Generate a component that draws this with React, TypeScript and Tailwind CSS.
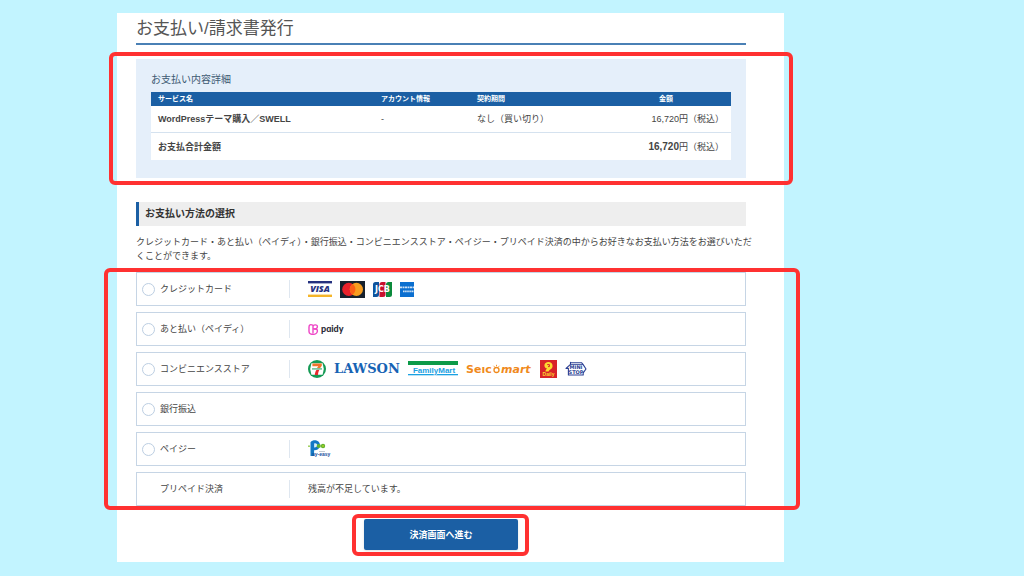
import type { ReactNode } from "react";

const sans = "font-['Liberation_Sans','Noto_Sans_CJK_JP',sans-serif]";

function Highlight({ className }: { className: string }) {
  return (
    <div
      aria-hidden="true"
      className={`absolute z-10 pointer-events-none rounded-md border-4 border-[#ff3131] ${className}`}
    />
  );
}

function Visa() {
  return (
    <svg width="24" height="16" viewBox="0 0 24 16" role="img" aria-label="VISA">
      <rect width="24" height="2.4" fill="#25317f" />
      <rect y="13.6" width="24" height="2.4" fill="#f5b52a" />
      <text
        x="12"
        y="11"
        textAnchor="middle"
        fontSize="9"
        fontWeight="800"
        fontStyle="italic"
        fontFamily="Open Sans, sans-serif"
        fill="#25317f"
      >
        VISA
      </text>
    </svg>
  );
}

function Mastercard() {
  return (
    <svg width="25" height="17" viewBox="0 0 25 17" role="img" aria-label="Mastercard">
      <rect width="25" height="17" fill="#16212d" />
      <circle cx="8.8" cy="8.3" r="6.6" fill="#e9222b" />
      <circle cx="16.4" cy="8.3" r="6.6" fill="#f79d1f" />
      <path d="M12.6 2.9a6.6 6.6 0 0 1 0 10.8a6.6 6.6 0 0 1 0-10.8z" fill="#fb5f16" />
    </svg>
  );
}

function Jcb() {
  return (
    <svg width="19" height="15" viewBox="0 0 19 15" role="img" aria-label="JCB">
      <path d="M2.5 0H6v12.5A2.5 2.5 0 0 1 3.5 15H0V2.5A2.5 2.5 0 0 1 2.5 0z" fill="#0f549d" />
      <path d="M9 0h3.5v12.5A2.5 2.5 0 0 1 10 15H6.5V2.5A2.5 2.5 0 0 1 9 0z" fill="#c8102e" />
      <path d="M15.5 0H19v12.5a2.5 2.5 0 0 1-2.5 2.5H13V2.5A2.5 2.5 0 0 1 15.5 0z" fill="#0b8a3c" />
      <text
        x="9.5"
        y="10"
        textAnchor="middle"
        fontSize="8"
        fontWeight="700"
        fontFamily="DejaVu Sans, sans-serif"
        fill="#fff"
      >
        JCB
      </text>
    </svg>
  );
}

function Amex() {
  return (
    <svg width="14" height="15" viewBox="0 0 14 15" role="img" aria-label="American Express">
      <rect width="14" height="15" fill="#0b6fd0" />
      <g stroke="#fff" strokeWidth="1.6" opacity=".8">
        <path d="M0 5.4h14" strokeDasharray="2 .5" />
        <path d="M3 9.4h11" strokeDasharray="1.6 .5" />
      </g>
    </svg>
  );
}

function Paidy() {
  return (
    <svg width="36" height="14" viewBox="0 0 36 14" role="img" aria-label="paidy">
      <g fill="none" stroke="#ee45c6" strokeWidth="1.4" strokeLinecap="round">
        <path d="M4.6 3.2C2.6 2 1 3 1 5v4.400c0 2 2 3.400 4 2.600" />
        <path d="M5 10.400V4.600C5 2.600 9.400 2 9.400 4.700c0 2-2 2.300-3.600 2.200" />
        <path d="M6.400 7c2-.2 3.200.6 3 2.200C9.200 11 7.400 12.600 5 12.400" />
      </g>
      <text
        x="13"
        y="10"
        fontSize="9"
        fontWeight="900"
        fontFamily="Lato, sans-serif"
        fill="#2d2c38"
      >
        pɑidy
      </text>
    </svg>
  );
}

function SevenEleven() {
  return (
    <svg width="18" height="18" viewBox="0 0 18 18" role="img" aria-label="セブン-イレブン">
      <circle cx="9" cy="9" r="9" fill="#159a55" />
      <path d="M3.4 3.2h11.2l1.2 5.8-1.2 5.8H3.4L2.2 9z" fill="#fff" />
      <path d="M4.4 3.6h9.4v2.2l-1.800 2.400H8.800l1.500-2H4.400z" fill="#f2732b" />
      <path d="M8.600 9.800h2.800c-.9 1.600-1.300 3.200-1.400 5.200H6.800c.1-2 .7-3.800 1.800-5.200z" fill="#e62a2e" />
      <path d="M4 8.200h10v1.400H4z" fill="#5eb98a" />
    </svg>
  );
}

function Lawson() {
  return (
    <svg width="66" height="14" viewBox="0 0 66 14" role="img" aria-label="LAWSON">
      <text
        x="0"
        y="11"
        fontSize="13"
        fontWeight="700"
        fontFamily="DejaVu Serif, serif"
        fill="#1763b4"
      >
        LAWSON
      </text>
    </svg>
  );
}

function FamilyMart() {
  return (
    <svg width="50" height="16" viewBox="0 0 50 16" role="img" aria-label="FamilyMart">
      <rect width="50" height="4" fill="#0c9a48" />
      <rect y="13" width="50" height="1.3" fill="#1ba1e2" />
      <text
        x="26"
        y="12"
        textAnchor="middle"
        fontSize="8"
        fontWeight="700"
        fontFamily="Liberation Sans, sans-serif"
        fill="#1ba1e2"
        stroke="#fff"
        strokeWidth="1"
        paintOrder="stroke"
      >
        FamilyMart
      </text>
    </svg>
  );
}

function Seicomart() {
  return (
    <svg width="66" height="14" viewBox="0 0 66 14" role="img" aria-label="Seicomart">
      <g fontSize="11" fontWeight="700" fontFamily="DejaVu Sans, sans-serif" fill="#f08a1c">
        <text x="0" y="11">
          Seıc
        </text>
        <text x="35" y="11" fontStyle="italic">
          mart
        </text>
      </g>
      <circle cx="30.500" cy="8" r="2.500" fill="none" stroke="#f08a1c" strokeWidth="1.300" />
      <path
        d="M27.500 3.800l1 1M30.500 2.800v1.400M33.500 3.800l-1 1"
        stroke="#f08a1c"
        strokeWidth=".9"
      />
    </svg>
  );
}

function Daily() {
  return (
    <svg width="17" height="18" viewBox="0 0 17 18" role="img" aria-label="デイリーヤマザキ">
      <rect width="17" height="18" fill="#d8232a" />
      <path
        d="M4.400 5.600C4.400 3.400 6.200 2 8.400 2c2.400 0 4.200 1.600 4.200 3.900 0 1.900-1.200 2.900-2.400 3.500-1 .5-1.200 1.200-1.600 2.200H5.400c.2-1.400.8-2.200 1.800-3C5.400 8.400 4.400 7.200 4.400 5.600z"
        fill="#fbd930"
      />
      <path d="M7.200 4.600h2.200v2H8" fill="none" stroke="#d8232a" strokeWidth="1" />
      <text
        x="8.5"
        y="16"
        textAnchor="middle"
        fontSize="5"
        fontWeight="700"
        fontFamily="Liberation Sans, sans-serif"
        fill="#fbd930"
      >
        Daily
      </text>
    </svg>
  );
}

function MiniStop() {
  return (
    <svg width="22" height="16" viewBox="0 0 22 16" role="img" aria-label="MINI STOP">
      <path
        d="M5.500 1.200V3.400L1 7.400h2.400V14h14.800v-2.200L21 8l-3-4.600-1.500-1.700H5.500z"
        fill="#fff"
        stroke="#2a3f93"
        strokeWidth="1.100"
        strokeLinejoin="round"
      />
      <path d="M6 3.500h12" stroke="#2a3f93" strokeWidth=".8" />
      <g
        fontSize="5"
        fontWeight="700"
        fontFamily="DejaVu Sans, sans-serif"
        fill="#2a3f93"
        textAnchor="middle"
      >
        <text x="11" y="8">
          MINI
        </text>
        <text x="11" y="13">
          STOP
        </text>
      </g>
    </svg>
  );
}

function PayEasy() {
  return (
    <svg width="24" height="18" viewBox="0 0 24 18" role="img" aria-label="Pay-easy">
      <path
        d="M2.500 2.200C4 .5 6.500 0 8.500.6c3 .9 4.200 3.900 3 6.700-.9 2.100-2.900 3.200-5.400 3V16H2.500z"
        fill="#1478c4"
      />
      <path d="M6.100 3.400c2-.6 3.300.5 3.100 2.100-.2 1.300-1.300 2.100-3.100 2z" fill="#d9effa" />
      <circle cx="10.800" cy="6" r="2.100" fill="#63b32e" />
      <circle cx="15" cy="6" r="2.200" fill="#63b32e" />
      <circle cx="15" cy="6" r=".8" fill="#d9e021" />
      <circle cx="1" cy="6.200" r=".9" fill="#8cc63f" />
      <path d="M11 11.500h6" stroke="#9aa7b5" strokeWidth=".6" />
      <text
        x="4"
        y="16"
        fontSize="5"
        fontWeight="700"
        fontFamily="Liberation Sans, sans-serif"
        fill="#1b4f9c"
      >
        ay-easy
      </text>
    </svg>
  );
}

type Method = {
  id: string;
  label: string;
  content?: ReactNode;
  disabled?: boolean;
};

const methods: Method[] = [
  {
    id: "card",
    label: "クレジットカード",
    content: (
      <>
        <Visa />
        <Mastercard />
        <Jcb />
        <Amex />
      </>
    ),
  },
  { id: "paidy", label: "あと払い（ペイディ）", content: <Paidy /> },
  {
    id: "cvs",
    label: "コンビニエンスストア",
    content: (
      <>
        <SevenEleven />
        <Lawson />
        <FamilyMart />
        <Seicomart />
        <Daily />
        <MiniStop />
      </>
    ),
  },
  { id: "bank", label: "銀行振込" },
  { id: "payeasy", label: "ペイジー", content: <PayEasy /> },
  {
    id: "prepaid",
    label: "プリペイド決済",
    content: "残高が不足しています。",
    disabled: true,
  },
];

function MethodRow({ method }: { method: Method }) {
  const box = "flex items-center gap-[5px] w-[152px] pl-[5px] shrink-0";

  return (
    <li className="flex items-center h-[34px] border border-[#c6d5e5] bg-white">
      {method.disabled ? (
        <div className={box}>
          <span className="w-[13px]" />
          {method.label}
        </div>
      ) : (
        <label htmlFor={method.id} className={box}>
          <input
            type="radio"
            id={method.id}
            name="method"
            className="appearance-none w-[13px] h-[13px] rounded-full border border-[#bccee2] bg-white checked:border-4 checked:border-[#1b5fa4]"
          />
          {method.label}
        </label>
      )}
      {method.content && (
        <div className="flex items-center h-[18px] gap-2 pl-[18px] border-l border-[#dfe7f0]">
          {method.content}
        </div>
      )}
    </li>
  );
}

export default function App() {
  return (
    <div
      className={`min-h-screen bg-[#c2f4ff] pt-[13px] pb-[14px] pl-[117px] pr-[240px] text-[9px] leading-[14px] text-[#444] ${sans}`}
    >
      <main className="bg-white pl-[19px] pr-[38px] pb-3">
        <h1 className="pt-0.5 text-[17px] leading-[28px] text-[#555] border-b-2 border-[#4a80b5]">
          お支払い/請求書発行
        </h1>

        <section className="relative mt-[14px] px-[15px] pt-[14px] pb-[18px] bg-[#e5effa]">
          <Highlight className="-top-[7px] -bottom-[7px] -left-[27px] -right-[47px]" />
          <h2 className="mb-[5px] text-[10px] leading-[14px] text-[#3d5a73]">お支払い内容詳細</h2>
          <table className="w-full table-fixed border-separate border-spacing-0 bg-white text-left">
            <colgroup>
              <col />
              <col className="w-[96px]" />
              <col className="w-[176px]" />
              <col className="w-[85px]" />
            </colgroup>
            <thead className="bg-[#1b5fa4] text-white text-[7px] leading-[14px]">
              <tr>
                <th className="p-0 pl-[7px]">サービス名</th>
                <th className="p-0 pl-[7px]">アカウント情報</th>
                <th className="p-0 pl-[7px]">契約期間</th>
                <th className="p-0 pl-[13px]">金額</th>
              </tr>
            </thead>
            <tbody>
              <tr>
                <td className="h-[27px] p-0 pl-[7px] font-bold border-b border-[#d5e2ef]">
                  WordPressテーマ購入／SWELL
                </td>
                <td className="p-0 pl-[7px] border-b border-[#d5e2ef]">-</td>
                <td className="p-0 pl-[7px] border-b border-[#d5e2ef]">なし（買い切り）</td>
                <td className="p-0 pr-[7px] text-right whitespace-nowrap border-b border-[#d5e2ef]">
                  16,720円（税込）
                </td>
              </tr>
              <tr>
                <td colSpan={3} className="h-[27px] p-0 pl-[7px] font-bold">
                  お支払合計金額
                </td>
                <td className="p-0 pr-[7px] text-right whitespace-nowrap">
                  <strong className="text-[10px]">16,720</strong>円（税込）
                </td>
              </tr>
            </tbody>
          </table>
        </section>

        <h2 className="mt-6 pl-1.5 border-l-[3px] border-[#1b5fa4] bg-[#eee] text-[10px] leading-[24px] font-bold text-[#333]">
          お支払い方法の選択
        </h2>
        <p className="mt-[9px] -mr-3">
          クレジットカード・あと払い（ペイディ）・銀行振込・コンビニエンスストア・ペイジー・プリペイド決済の中からお好きなお支払い方法をお選びいただくことができます。
        </p>

        <div className="relative mt-[9px]">
          <Highlight className="-top-1 -bottom-1 -left-8 -right-[54px]" />
          <ul className="flex flex-col gap-1.5">
            {methods.map((m) => (
              <MethodRow key={m.id} method={m} />
            ))}
          </ul>
        </div>

        <div className="flex justify-center mt-[13px]">
          <div className="relative">
            <Highlight className="-top-[5px] -bottom-1.5 -left-3 -right-[11px]" />
            <button
              type="button"
              className="block w-[154px] h-[31px] rounded-xs bg-[#1b5fa4] text-white font-bold shadow-sm"
            >
              決済画面へ進む
            </button>
          </div>
        </div>
      </main>
    </div>
  );
}
